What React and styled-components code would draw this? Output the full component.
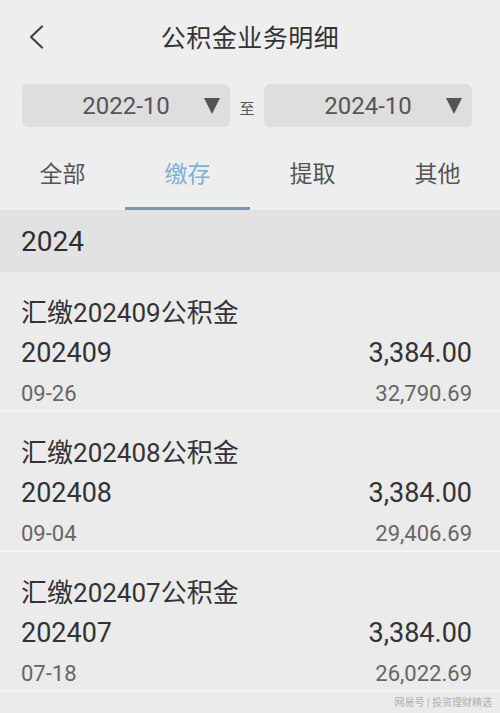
import React from 'react';
import styled, { createGlobalStyle } from 'styled-components';

const GlobalStyle = createGlobalStyle`
    html, body {
        margin: 0;
        padding: 0;
        background: #ececec;
    }
    body {
        font-family: Roboto, "Noto Sans CJK SC", "Noto Sans", sans-serif;
        color: #333;
    }
`

const Page = styled.div`
    width: 500px;
    min-height: 713px;
    display: flex;
    flex-direction: column;
    background: #ebebeb;
`

const Header = styled.div`
    height: 72px;
    display: grid;
    grid-template-columns: 70px 1fr 70px;
    align-items: center;
    background: #eeeeee;
`

const BackButton = styled.div`
    display: flex;
    align-items: center;
    padding-left: 29px;
    padding-top: 2px;
`

const Title = styled.div`
    text-align: center;
    font-size: 25px;
    color: #333;
    letter-spacing: 0.5px;
`

const DateRow = styled.div`
    display: flex;
    flex-direction: row;
    align-items: center;
    padding: 12px 28px 13px 22px;
    background: #eeeeee;
`

const DateBox = styled.div`
    width: 208px;
    height: 43px;
    display: grid;
    grid-template-columns: 1fr auto 1fr;
    align-items: center;
    background: #dedede;
    border-radius: 6px;
`

const DateText = styled.span`
    grid-column: 2;
    font-size: 24px;
    color: #555;
`

const Arrow = styled.span`
    grid-column: 3;
    justify-self: end;
    margin-right: 10px;
    width: 0;
    height: 0;
    border-left: 8.5px solid transparent;
    border-right: 8.5px solid transparent;
    border-top: 16px solid #555;
`

const To = styled.span`
    width: 34px;
    text-align: center;
    font-size: 15px;
    color: #555;
    padding-top: 4px;
`

const Tabs = styled.div`
    height: 70px;
    display: grid;
    grid-template-columns: repeat(4, 1fr);
    background: #eeeeee;
`

const Tab = styled.div`
    display: flex;
    align-items: center;
    justify-content: center;
    font-size: 23px;
    color: ${p => (p.$active ? '#7cb2d8' : '#555')};
    border-bottom: 3px solid ${p => (p.$active ? '#6f9dc0' : 'transparent')};
    padding-bottom: 4px;
    box-sizing: border-box;
`

const YearHeader = styled.div`
    height: 62px;
    display: flex;
    align-items: center;
    padding-left: 21px;
    background: #e2e2e2;
    font-size: 28px;
    font-weight: 400;
    color: #2e2e2e;
`

const Item = styled.div`
    padding: 21px 28px 0 21px;
    height: 140px;
    box-sizing: border-box;
    border-bottom: 2px solid #f3f3f3;
    background: #ebebeb;
`

const ItemTitle = styled.div`
    font-size: 26px;
    line-height: 40px;
    color: #333;
`

const Line = styled.div`
    display: flex;
    justify-content: space-between;
    align-items: center;
    line-height: ${p => (p.$small ? '39px' : '41px')};
    font-size: ${p => (p.$small ? '22px' : '27px')};
    color: ${p => (p.$small ? '#666' : '#333')};
`

const Watermark = styled.div`
    display: flex;
    justify-content: flex-end;
    padding: 2px 8px 0 0;
    font-size: 10px;
    color: #b0b0b0;
`

const items = [
    { month: '202409', date: '09-26', amount: '3,384.00', balance: '32,790.69' },
    { month: '202408', date: '09-04', amount: '3,384.00', balance: '29,406.69' },
    { month: '202407', date: '07-18', amount: '3,384.00', balance: '26,022.69' },
];

export default function App() {
    return (
        <Page>
            <GlobalStyle />
            <Header>
                <BackButton>
                    <svg width="15" height="24" viewBox="0 0 15 24">
                        <polyline points="13,1.5 2,12 13,22.5" fill="none" stroke="#444" strokeWidth="2.2" strokeLinecap="round" strokeLinejoin="round" />
                    </svg>
                </BackButton>
                <Title>公积金业务明细</Title>
                <div />
            </Header>

            <DateRow>
                <DateBox>
                    <DateText>2022-10</DateText>
                    <Arrow />
                </DateBox>
                <To>至</To>
                <DateBox>
                    <DateText>2024-10</DateText>
                    <Arrow />
                </DateBox>
            </DateRow>

            <Tabs>
                <Tab>全部</Tab>
                <Tab $active>缴存</Tab>
                <Tab>提取</Tab>
                <Tab>其他</Tab>
            </Tabs>

            <YearHeader>2024</YearHeader>

            {items.map(item => (
                <Item key={item.month}>
                    <ItemTitle>汇缴{item.month}公积金</ItemTitle>
                    <Line>
                        <span>{item.month}</span>
                        <span>{item.amount}</span>
                    </Line>
                    <Line $small>
                        <span>{item.date}</span>
                        <span>{item.balance}</span>
                    </Line>
                </Item>
            ))}

            <Watermark>网易号 | 投资理财精选</Watermark>
        </Page>
    )
};
